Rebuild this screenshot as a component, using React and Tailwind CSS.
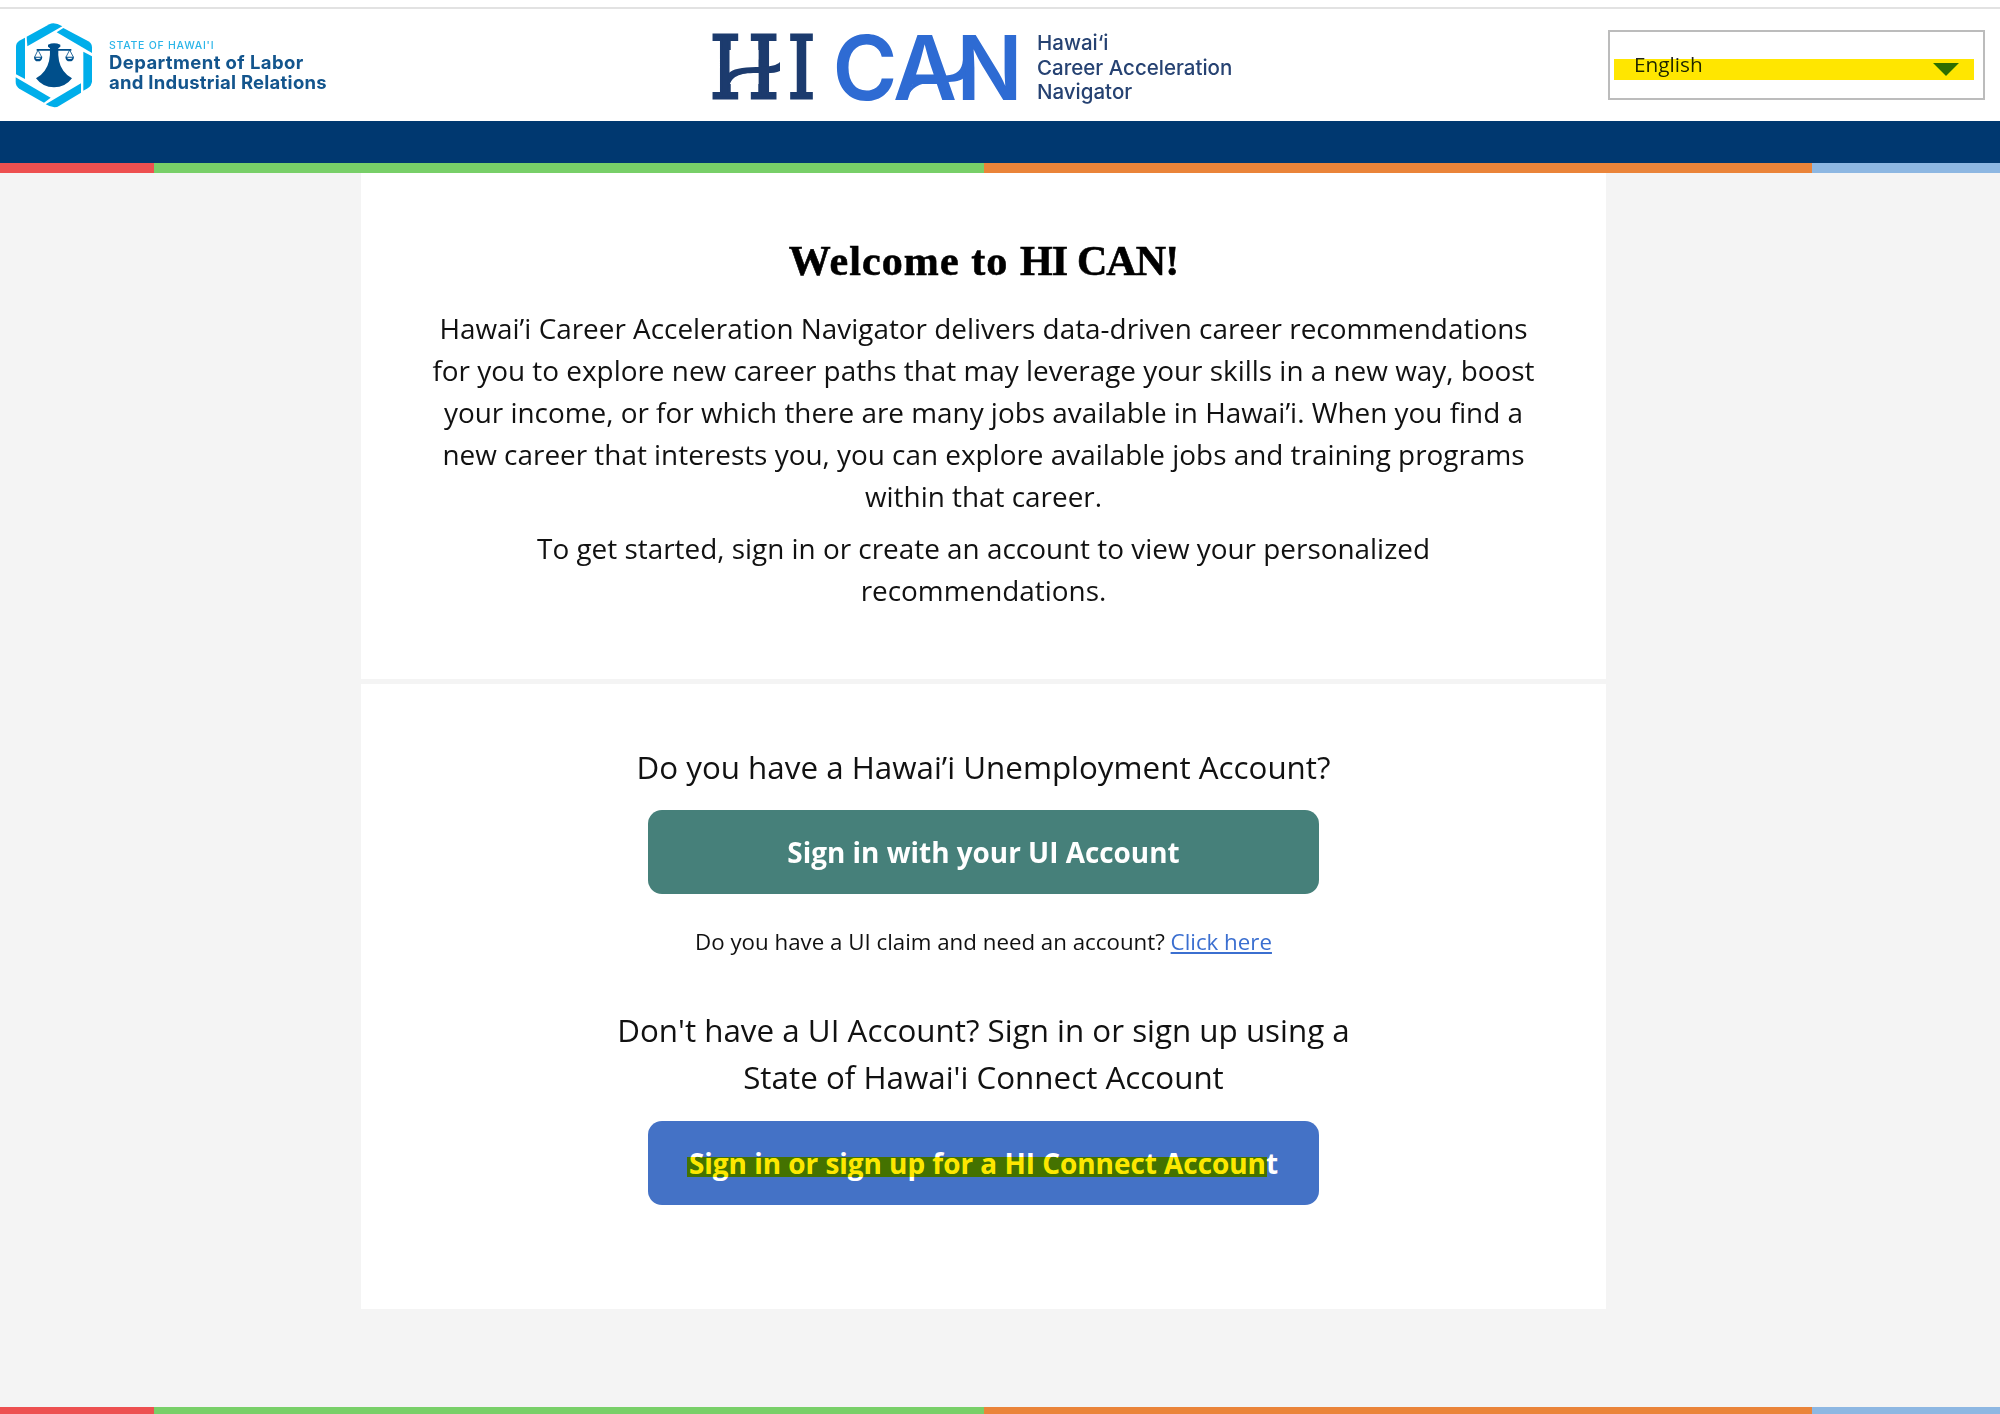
const sans = "font-['Open_Sans','Noto_Sans',sans-serif]";

function Stripe({ className }) {
  return (
    <div className={`flex w-full shrink-0 ${className}`}>
      <div className="w-[154px] bg-[#ed5050]" />
      <div className="w-[830px] bg-[#78cf68]" />
      <div className="w-[828px] bg-[#ea8439]" />
      <div className="flex-1 bg-[#8db7e2]" />
    </div>
  );
}

function DepartmentSeal() {
  return (
    <svg className="h-[86px] w-[78px] shrink-0" viewBox="45 66 234 258">
      <g fill="#00aeea">
        <path d="M80 110 L148 73 Q163 65 187 79 L82 139 Z" />
        <path d="M170 97 L190 84 L265 124 Q276 130 276 142 L276 159 Z" />
        <path d="M250 155 L276 169 L276 244 Q275 258 263 265 L250 272 Z" />
        <path d="M243 250 L243 278 L178 317 Q163 328 137 313 Z" />
        <path d="M47 232 L152 293 L132 308 L58 266 Q47 258 47 245 Z" />
        <path d="M75 113 L75 237 L48 223 L48 140 Q48 128 58 122 Z" />
      </g>
      <g fill="#004f8b">
        <path d="M144 134 Q162 126 181 134 L181 140 L175 145 Q172 190 190 212 Q200 226 216 235 Q196 262 162 262 Q128 262 108 235 Q124 226 134 212 Q152 190 150 145 L144 140 Z" />
        <path d="M110 147 H214 V152 H110 Z" />
        <path d="M102 170 H127 Q126 184 114 184 Q102 184 102 170 Z M196 170 H222 Q221 184 209 184 Q197 184 196 170 Z" />
      </g>
      <path d="M106 173 H123 Q120 177 114 177 Q108 177 106 173 Z M201 173 H218 Q215 177 209 177 Q203 177 201 173 Z" fill="#fff" />
      <path d="M114 150 L104 171 M114 150 L125 171 M209 150 L198 171 M209 150 L220 171" fill="none" stroke="#004f8b" strokeWidth="2.500" />
    </svg>
  );
}

function Wordmark() {
  return (
    <svg className="h-[86px] w-[310px] shrink-0 overflow-visible" viewBox="710 22 310 86">
      <g fill="#1c3b6e" stroke="#1c3b6e" strokeWidth="3" fontFamily="'DejaVu Serif', serif" fontSize="86">
        <text x="709.500" y="98" textLength="70" lengthAdjust="spacingAndGlyphs">H</text>
        <text x="787.500" y="98" textLength="28" lengthAdjust="spacingAndGlyphs">I</text>
      </g>
      <path d="M729.500 50 H758.500 V84 H729.500 Z" fill="#fff" />
      <path d="M728 74 C732 68.500 742 67.500 756 67 C768 67 776 66 780 62 L780 71 C774 74 766 73 756 73 C740 73 730 76 729 89 Z" fill="#1c3b6e" />
      <g fill="#2e6bd3" fontFamily="Inter, sans-serif" fontSize="90" fontWeight="600">
        <text x="832.500" y="99.500" textLength="65" lengthAdjust="spacingAndGlyphs">C</text>
        <text x="893" y="99.500" textLength="64" lengthAdjust="spacingAndGlyphs">A</text>
        <text x="956.500" y="99.500" textLength="66" lengthAdjust="spacingAndGlyphs">N</text>
      </g>
      <path d="M914 80 C924 75 934 76 946 75.500 C957 75 962 70 963 60 L966 76 C960 83 950 82 938 82 C922 82 914 86 909 94 Z" fill="#2e6bd3" />
    </svg>
  );
}

function LanguageSelect() {
  return (
    <div className="relative flex h-[70px] w-[377px] shrink-0 items-center border-2 border-[#bcbcbc] bg-white">
      <span className={`${sans} pb-[2px] pl-[24px] text-[20.8px] leading-[30px] text-[#222]`}>English</span>
      <svg className="absolute top-[31px] left-[323px] h-[13px] w-[26px]" viewBox="0 0 26 13">
        <path d="M0 0 H26 L13 13 Z" fill="#2d6d00" />
      </svg>
      <div className="absolute top-[27px] left-[4px] h-[21px] w-[360px] bg-[#ffe600] mix-blend-darken" />
    </div>
  );
}

function Line({ className, children }) {
  return <span className={`block whitespace-nowrap ${className ?? ""}`}>{children}</span>;
}

export default function App() {
  return (
    <div className={`${sans} flex h-[1414px] w-[2000px] flex-col overflow-hidden bg-[#f4f4f4] text-[#111]`}>
      <div className="h-[7px] shrink-0 bg-white" />
      <header className="flex h-[114px] shrink-0 border-t-2 border-[#e2e2e2] bg-white">
        <div className="flex w-[710px] pt-[13px] pl-[15px]">
          <DepartmentSeal />
          <div className="pt-[18px] pl-[16px] font-['Inter',sans-serif] whitespace-nowrap">
            <div className="text-[10.5px] leading-[12px] font-medium tracking-[0.75px] text-[#2bb5e8]">STATE OF HAWAI'I</div>
            <div className="text-[18.5px] leading-[20px] font-bold text-[#13558d]">
              <Line className="tracking-[0.4px]">Department of Labor</Line>
              <Line className="tracking-[0.25px]">and Industrial Relations</Line>
            </div>
          </div>
        </div>
        <div className="flex w-[898px] pt-[13px]">
          <Wordmark />
          <div className="pt-[9px] pl-[17px] font-['Inter',sans-serif] text-[20.5px] leading-[24.5px] font-medium text-[#264272]">
            <Line>Hawai‘i</Line>
            <Line>Career Acceleration</Line>
            <Line>Navigator</Line>
          </div>
        </div>
        <div className="pt-[21px]">
          <LanguageSelect />
        </div>
      </header>
      <div className="h-[42px] shrink-0 bg-[#003870]" />
      <Stripe className="h-[10px]" />
      <main className="ml-[361px] flex w-[1245px] shrink-0 flex-col gap-[5px] text-center">
        <section className="h-[506px] bg-white pt-[62px]">
          <h1 className="font-['Liberation_Serif',serif] text-[42px] leading-[52px] font-bold whitespace-nowrap text-black [-webkit-text-stroke:0.6px_black]">
            <span className="tracking-[1.1px]">Welcome to </span>
            <span className="tracking-[-0.9px]">HI CAN!</span>
          </h1>
          <p className="mt-[20px] flex flex-col items-center text-[27.9px] leading-[42px]">
            <Line>Hawai’i Career Acceleration Navigator delivers data-driven career recommendations</Line>
            <Line>for you to explore new career paths that may leverage your skills in a new way, boost</Line>
            <Line>your income, or for which there are many jobs available in Hawai’i. When you find a</Line>
            <Line>new career that interests you, you can explore available jobs and training programs</Line>
            <Line>within that career.</Line>
          </p>
          <p className="mt-[10px] flex flex-col items-center text-[27.9px] leading-[42px]">
            <Line>To get started, sign in or create an account to view your personalized</Line>
            <Line>recommendations.</Line>
          </p>
        </section>
        <section className="flex h-[625px] flex-col items-center bg-white pt-[59px]">
          <h2 className="text-[31.35px] leading-[47px]">Do you have a Hawai’i Unemployment Account?</h2>
          <button className="mt-[20px] flex h-[84px] w-[671px] items-center justify-center rounded-[14px] bg-[#46807a] pt-px text-[27.9px] font-bold text-white">
            Sign in with your UI Account
          </button>
          <p className="mt-[32px] text-[22.3px] leading-[32px]">
            Do you have a UI claim and need an account? <a className="text-[#3b6fd0] underline">Click here</a>
          </p>
          <h2 className="mt-[48px] text-[31.35px] leading-[47px]">
            <Line>Don't have a UI Account? Sign in or sign up using a</Line>
            <Line>State of Hawai'i Connect Account</Line>
          </h2>
          <button className="relative mt-[21px] flex h-[84px] w-[671px] items-center justify-center rounded-[14px] bg-[#4472c6] pt-px text-[27.9px] font-bold text-white">
            Sign in or sign up for a HI Connect Account
            <span className="absolute top-[36px] left-[39px] h-[20px] w-[580px] bg-[#ffe600] mix-blend-darken" />
          </button>
        </section>
      </main>
      <div className="flex-1" />
      <Stripe className="h-[7px]" />
    </div>
  );
}
